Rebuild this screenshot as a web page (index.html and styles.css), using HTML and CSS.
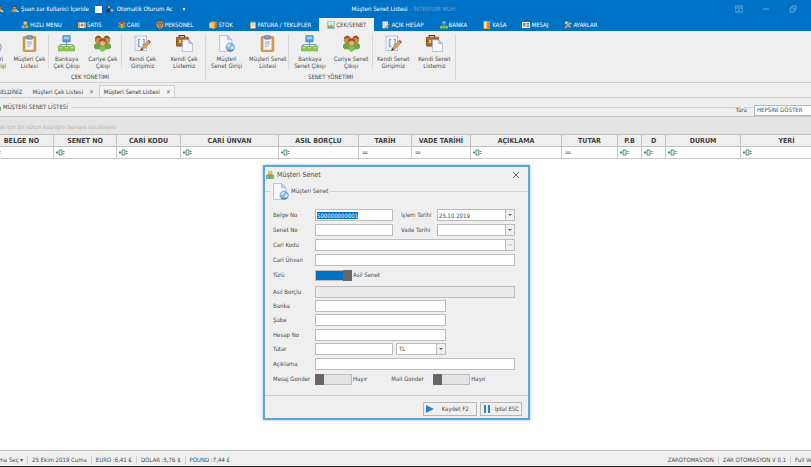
FILE: index.html
```html
<!DOCTYPE html>
<html lang="tr">
<head>
<meta charset="utf-8">
<title>Müşteri Senet Listesi</title>
<link rel="stylesheet" href="styles.css">
</head>
<body>
<svg class="defs" aria-hidden="true">
  <symbol id="clipboard" viewBox="0 0 32 32">
    <rect x="4" y="3" width="24" height="28" rx="2" fill="#d99a45" stroke="#ad7430"/>
    <rect x="8" y="7" width="16" height="21" fill="#f6f8fc" stroke="#b9c1cf"/>
    <rect x="10" y="1" width="12" height="7" rx="2" fill="#8f98a8" stroke="#687285"/>
    <path d="M11 13h10M11 17h10M11 21h7" stroke="#8fa6c8" stroke-width="2"/>
  </symbol>
  <symbol id="network" viewBox="0 0 32 32">
    <rect x="9" y="1" width="14" height="12" rx="1" fill="#5a9ee0" stroke="#3b74ae"/>
    <rect x="11" y="3" width="10" height="5" fill="#9dccf5"/>
    <path d="M16 13v8M4 22v-4h24v4" fill="none" stroke="#7d9dbd" stroke-width="2"/>
    <g fill="#8cc84b" stroke="#6ba334"><rect x="0" y="21" width="10" height="9" rx="1"/><rect x="11" y="21" width="10" height="9" rx="1"/><rect x="22" y="21" width="10" height="9" rx="1"/></g>
    <path d="M2 24h6M13 24h6M24 24h6" stroke="#c2e896" stroke-width="2"/>
  </symbol>
  <symbol id="people" viewBox="0 0 32 32">
    <path d="M0 23q0-8 8-7h16q8-1 8 7l-3 3h-6l-7 5-7-5H3z" fill="#69a83a" stroke="#467c20"/>
    <path d="M10 27q1-7 6-7t6 7l-6 4z" fill="#84c254"/>
    <g fill="#cf9257" stroke="#9a6236"><circle cx="8" cy="9" r="6"/><circle cx="24" cy="9" r="6"/><circle cx="16" cy="14" r="7"/></g>
    <path d="M2 8q0-6 6-7 5 0 6 5-6-1-12 2zM18 6q1-5 6-5t6 7q-6-3-12-2zM9 13q0-7 7-7t7 7q-7-4-14 0z" fill="#96562a"/>
    <circle cx="16" cy="16" r="4" fill="#e9b47d"/>
  </symbol>
  <symbol id="face" viewBox="0 0 16 16">
    <path d="M1 3l4-2h6l4 2v7l-4 5H5l-4-5z" fill="#e09a4e"/><path d="M1 2l4 2 3-2 3 2 4-2v5l-4-2-3 1-3-1-4 2z" fill="#9a5424"/><path d="M4 8h3M9 8h3M6 12h4" stroke="#6b3513" stroke-width="2"/>
  </symbol>
  <symbol id="notepad" viewBox="0 0 32 32">
    <rect x="2" y="2" width="22" height="27" fill="#fafcff" stroke="#7f93b8"/>
    <path d="M6 2v27" stroke="#b9c8e2"/>
    <path d="M12 8H9v14h3M16 8h3v10h-3" fill="none" stroke="#6c8abf" stroke-width="2"/>
    <path d="M14 24 26 11l4 4-12 12-6 2z" fill="#e3a04e" stroke="#93602a"/>
    <path d="m26 11 2-2 4 4-2 2z" fill="#c34d3f"/><path d="m12 29 2-5 3 4z" fill="#5b4330"/>
  </symbol>
  <symbol id="briefcase" viewBox="0 0 32 32">
    <path d="M6 5V1h10v4" fill="none" stroke="#5f3418" stroke-width="2"/>
    <rect x="0" y="4" width="24" height="17" rx="2" fill="#ad6835" stroke="#6d3a18"/>
    <path d="M0 12h24" stroke="#74401d" stroke-width="2"/><rect x="5" y="9" width="5" height="6" fill="#eac15d"/>
    <path d="M12 9h12l7 7v15H12z" fill="#f4f8ff" stroke="#7f9dc8"/><path d="M24 9v7h7z" fill="#bfd3ee" stroke="#7f9dc8"/>
  </symbol>
  <symbol id="docglobe" viewBox="0 0 32 32">
    <path d="M3 1h15l8 8v22H3z" fill="#f5f8fd" stroke="#829dc4"/><path d="M18 1v8h8z" fill="#c8d9ef" stroke="#829dc4"/>
    <circle cx="23" cy="23" r="8" fill="#8fb9e0" stroke="#5f8dbd"/>
    <path d="M17 20q3-5 7-3l-2 4-4 2zM24 22l6-1q0 6-5 8z" fill="#d2e6f7"/>
    <path d="M17 28q5 2 12 0" fill="none" stroke="#5683b3" stroke-width="2"/>
  </symbol>
  <symbol id="user" viewBox="0 0 16 16">
    <circle cx="7" cy="4" r="3" fill="#e9b27b" stroke="#6a3b1c"/><path d="M1 14q0-7 6-7t6 7z" fill="#d78b3b"/><path d="M4 4q0-4 3-4t3 4Q7 2 4 4z" fill="#5d3218"/><path d="m9 10 6 4" stroke="#f5d17b" stroke-width="3"/>
  </symbol>
  <symbol id="userlock" viewBox="0 0 16 16">
    <circle cx="6" cy="4" r="3" fill="#d6a77c" stroke="#3d2a28"/><path d="M0 15q0-8 6-8t6 8z" fill="#24365d"/><circle cx="12" cy="11" r="4" fill="#4c84cf"/><path d="M12 9v4M10 11h4" stroke="#e8f2ff"/>
  </symbol>
  <symbol id="blocks" viewBox="0 0 16 16">
    <rect x="5" y="1" width="7" height="7" rx="1" fill="#f3cc4b" stroke="#a98114"/><rect x="1" y="8" width="7" height="7" rx="1" fill="#75b3e4" stroke="#32699a"/><rect x="8" y="8" width="7" height="7" rx="1" fill="#86bf4b" stroke="#4b7d20"/>
  </symbol>
  <symbol id="cash" viewBox="0 0 16 16"><rect y="3" width="16" height="11" fill="#f5efe4"/><path d="M0 3h4v11H0zM12 3h4v11h-4z" fill="#dfa45e"/><circle cx="8" cy="8" r="3" fill="#ce6e3d"/></symbol>
  <symbol id="box" viewBox="0 0 16 16"><path d="m5 1 10 1v10l-4 3-10-1V4z" fill="#efa63d"/><path d="m1 4 10 1v10L1 14z" fill="#f8cb71"/><path d="m11 5 4-3v10l-4 3z" fill="#c57a22"/></symbol>
  <symbol id="contact" viewBox="0 0 16 16"><rect y="2" width="16" height="12" fill="#f5f5f5"/><rect x="2" y="4" width="5" height="7" fill="#d96c53"/><path d="M9 5h5M9 8h5M9 11h5" stroke="#567eae" stroke-width="2"/></symbol>
  <symbol id="safe" viewBox="0 0 16 16"><rect x="1" width="13" height="16" rx="1" fill="#eea13c"/><path d="M2 2h5v12H2z" fill="#ffe0a0"/><path d="M9 4h4M9 8h4M9 12h4" stroke="#a8611a" stroke-width="2"/></symbol>
  <symbol id="tools" viewBox="0 0 16 16"><path d="m2 14 9-9M3 3l10 10" stroke="#e2a85c" stroke-width="3"/><path d="M1 4 5 0l4 3-5 4zM10 1l2 3 3-1q1 4-3 4l-3-3z" fill="#d4dbe4" stroke="#65707c"/></symbol>
  <symbol id="sheet" viewBox="0 0 16 16"><rect x="1" width="14" height="16" fill="#b9d3c4" stroke="#8fa6bd"/><path d="M3 3h10M3 6h10" stroke="#edf5f0" stroke-width="2"/><path d="M2 15V9l4 2 3-3 5 4v3z" fill="#80a96c"/></symbol>
  <symbol id="contains" viewBox="0 0 18 14"><path d="M6 2h6v10H6z" fill="#e5f2ea" stroke="#4b9271" stroke-width="2"/><path d="M0 7h4M2 4v6M14 5h3M14 9h3" stroke="#4b9271" stroke-width="2"/></symbol>
  <symbol id="equals" viewBox="0 0 18 14"><path d="M3 6h10M3 9h10" stroke="#8b9093" stroke-width="2"/></symbol>
</svg>

<div class="shell">
  <header class="titlebar">
    <div class="quick">
      <svg class="ic"><use href="#user"/></svg>
      <svg class="ic"><use href="#user"/></svg><span>Şuan zar Kullanici İçeride</span>
      <label class="auto"><input type="checkbox"><svg class="ic"><use href="#userlock"/></svg>Otomatik Oturum Ac</label>
      <span class="more">▾</span>
    </div>
    <h1>Müşteri Senet Listesi <span>- INTERYUM MUH.</span></h1>
    <div class="winbtns">
      <button aria-label="Şerit"><svg viewBox="0 0 8 8"><path d="M0 1h8v6H0zM0 3h8M4 6V4" /></svg></button>
      <button aria-label="Küçült"><svg viewBox="0 0 8 8"><path d="M1 4h6"/></svg></button>
      <button aria-label="Geri yükle"><svg viewBox="0 0 8 8"><path d="M1 3h4v4H1zM3 3V1h4v4H5"/></svg></button>
      <button aria-label="Kapat"><svg viewBox="0 0 8 8"><path d="m1 1 6 6M7 1 1 7"/></svg></button>
    </div>
  </header>

  <nav class="menu">
    <a href="#"><svg class="ic"><use href="#blocks"/></svg>HIZLI MENU</a>
    <a href="#"><svg class="ic"><use href="#cash"/></svg>SATIS</a>
    <a href="#"><svg class="ic"><use href="#people"/></svg>CARİ</a>
    <a href="#"><svg class="ic"><use href="#face"/></svg>PERSONEL</a>
    <a href="#"><svg class="ic"><use href="#box"/></svg>STOK</a>
    <a href="#"><svg class="ic"><use href="#clipboard"/></svg>FATURA / TEKLİFLER</a>
    <a href="#" class="active"><svg class="ic"><use href="#sheet"/></svg>ÇEK/SENET</a>
    <a href="#"><svg class="ic"><use href="#notepad"/></svg>AÇIK HESAP</a>
    <a href="#"><svg class="ic"><use href="#network"/></svg>BANKA</a>
    <a href="#"><svg class="ic"><use href="#safe"/></svg>KASA</a>
    <a href="#"><svg class="ic"><use href="#contact"/></svg>MESAJ</a>
    <a href="#"><svg class="ic"><use href="#tools"/></svg>AYARLAR</a>
  </nav>

  <div class="ribbon">
    <section class="group">
      <div class="sets">
        <div class="set">
          <button><svg><use href="#docglobe"/></svg>Müşteri<br>Çek Girişi</button>
          <button><svg><use href="#clipboard"/></svg>Müşteri Çek<br>Listesi</button>
        </div>
        <div class="set">
          <button><svg><use href="#network"/></svg>Bankaya<br>Çek Çıkışı</button>
          <button><svg><use href="#people"/></svg>Cariye Çek<br>Çıkışı</button>
        </div>
        <div class="set broad">
          <button><svg><use href="#notepad"/></svg>Kendi Çek<br>Girişimiz</button>
          <button><svg><use href="#briefcase"/></svg>Kendi Çek<br>Listemiz</button>
        </div>
      </div>
      <h2>ÇEK YONETİMİ</h2>
    </section>
    <section class="group wide">
      <div class="sets">
        <div class="set">
          <button><svg><use href="#docglobe"/></svg>Müşteri<br>Senet Girişi</button>
          <button><svg><use href="#clipboard"/></svg>Müşteri Senet<br>Listesi</button>
        </div>
        <div class="set">
          <button><svg><use href="#network"/></svg>Bankaya<br>Senet Çıkışı</button>
          <button><svg><use href="#people"/></svg>Cariye Senet<br>Çıkışı</button>
        </div>
        <div class="set">
          <button><svg><use href="#notepad"/></svg>Kendi Senet<br>Girişimiz</button>
          <button><svg><use href="#briefcase"/></svg>Kendi Senet<br>Listemiz</button>
        </div>
      </div>
      <h2>SENET YÖNETİMİ</h2>
    </section>
  </div>

  <div class="tabs">
    <a href="#">HOŞGELDİNİZ</a>
    <a href="#">Müşteri Çek Listesi <span class="x">✕</span></a>
    <a href="#" class="active">Müşteri Senet Listesi <span class="x">✕</span></a>
  </div>

  <main>
    <div class="listhead">
      <svg class="ic"><use href="#blocks"/></svg><h2>MÜŞTERİ SENET LİSTESİ</h2><span class="rule"></span>
    </div>
    <div class="filter">
      <label for="type">Türü</label>
      <select id="type"><option>HEPSİNİ GÖSTER</option></select>
    </div>
    <p class="hint">Gruplamak için bir sütun başlığını buraya sürükleyin</p>
    <table>
      <colgroup><col class="c14"><col class="c64"><col class="c63"><col class="c64"><col class="c98"><col class="c80"><col class="c53"><col class="c59"><col class="c91"><col class="c56"><col class="c24"><col class="c24"><col class="c75"><col></colgroup>
      <thead>
        <tr><th></th><th>BELGE NO</th><th>SENET NO</th><th>CARİ KODU</th><th>CARİ ÜNVAN</th><th>ASIL BORÇLU</th><th>TARİH</th><th>VADE TARİHİ</th><th>AÇIKLAMA</th><th>TUTAR</th><th>P.B</th><th>D</th><th>DURUM</th><th>YERİ</th></tr>
      </thead>
      <tbody>
        <tr>
          <td></td>
          <td><svg><use href="#contains"/></svg></td><td><svg><use href="#contains"/></svg></td><td><svg><use href="#contains"/></svg></td><td><svg><use href="#contains"/></svg></td><td><svg><use href="#contains"/></svg></td>
          <td><svg><use href="#equals"/></svg></td><td><svg><use href="#equals"/></svg></td>
          <td><svg><use href="#contains"/></svg></td><td><svg><use href="#equals"/></svg></td>
          <td><svg><use href="#contains"/></svg></td><td><svg><use href="#contains"/></svg></td><td><svg><use href="#contains"/></svg></td><td><svg><use href="#contains"/></svg></td>
        </tr>
      </tbody>
    </table>
  </main>

  <footer>
    <span>Tema Seç ▾</span><span>25 Ekim 2019 Cuma</span><span>EURO :6,41 €</span><span>DOLAR :5,76 $</span><span class="last">POUND :7,44 £</span>
    <span class="push">ZAROTOMASYON</span><span>ZAR OTOMASYON V 0.1</span><span class="last">Full Versiyon</span>
  </footer>
</div>

<form class="dialog" role="dialog" aria-labelledby="dlg-title">
  <div class="dlg-head">
    <svg class="ic"><use href="#blocks"/></svg><h2 id="dlg-title">Müşteri Senet</h2>
    <button type="button" aria-label="Kapat"><svg viewBox="0 0 8 8"><path d="m1 1 6 6M7 1 1 7"/></svg></button>
  </div>
  <div class="dlg-sub">
    <span class="rule short"></span><svg><use href="#docglobe"/></svg><span>Müşteri Senet</span><span class="rule"></span>
  </div>
  <div class="fields">
    <div class="block roomy">
      <div class="row"><label for="belge">Belge No</label><input id="belge" class="half" value="S00000000001"><label for="islem" class="mid">İşlem Tarihi</label><span class="combo"><input id="islem" value="25.10.2019"><button type="button" aria-label="Takvim"><i></i></button></span></div>
      <div class="row"><label for="senet">Senet No</label><input id="senet" class="half"><label for="vade" class="mid">Vade Tarihi</label><span class="combo"><input id="vade"><button type="button" aria-label="Takvim"><i></i></button></span></div>
      <div class="row"><label for="kod">Cari Kodu</label><span class="combo"><input id="kod"><button type="button" aria-label="Seç">···</button></span></div>
      <div class="row"><label for="unvan">Cari Ünvan</label><input id="unvan"></div>
      <div class="row"><label for="turu">Türü</label><input id="turu" type="checkbox" class="switch" checked><span>Asil Senet</span></div>
    </div>
    <div class="block">
      <div class="row"><label for="asil">Asıl Borçlu</label><input id="asil" disabled></div>
      <div class="row"><label for="banka">Banka</label><input id="banka" class="medium"></div>
      <div class="row"><label for="sube">Şube</label><input id="sube" class="medium"></div>
    </div>
    <div class="block">
      <div class="row"><label for="hesap">Hesap No</label><input id="hesap" class="medium"></div>
      <div class="row"><label for="tutar">Tutar</label><input id="tutar" class="half"><span class="combo currency"><select aria-label="Para birimi"><option>TL</option></select><b><i></i></b></span></div>
    </div>
    <div class="block roomy">
      <div class="row"><label for="aciklama">Açıklama</label><input id="aciklama"></div>
      <div class="row"><label for="mesaj">Mesaj Gonder</label><input id="mesaj" type="checkbox" class="switch"><span>Hayır</span><label for="mail" class="mail">Mail Gonder</label><input id="mail" type="checkbox" class="switch"><span>Hayır</span></div>
    </div>
  </div>
  <div class="actions">
    <button type="button" class="save"><svg viewBox="0 0 8 8"><path d="M0 0 8 4 0 8z"/></svg>Kaydet F2</button>
    <button type="button"><svg viewBox="0 0 8 8"><path d="M1 0h2v8H1zM5 0h2v8H5z"/></svg>İptal ESC</button>
  </div>
</form>
<script src="app.js"></script>
</body>
</html>
```
FILE: styles.css
```css
* { box-sizing: border-box; }
html, body { height: 100%; overflow: hidden; }
body { margin: 0; color: #484848; font: 6px/8px "DejaVu Sans Condensed", "Noto Sans", sans-serif; background: #fff; }
h1, h2, p { margin: 0; font: inherit; }
a { color: inherit; text-decoration: none; }
button, input, select { font: inherit; color: inherit; margin: 0; padding: 0; border: 0; border-radius: 0; background: none; }
select { appearance: none; }
svg { display: block; flex: none; }
.defs { position: absolute; width: 0; height: 0; }
.ic { width: 8px; height: 8px; }
.rule { flex: 1; height: 1px; background: #d4d4d4; }

/* the window is maximised a little past both screen edges */
.shell { display: flex; flex-direction: column; min-height: 100%; margin-left: -25px; width: calc(100% + 47px); }

.titlebar { display: grid; grid-template-columns: 1fr auto 1fr; align-items: center; height: 18px; color: #fff; background: #0072c6; }
.titlebar h1 span { color: #62a6dc; }
.quick { display: flex; align-items: center; gap: 2px; padding-left: 21px; }
.quick .ic + .ic { margin-left: 5px; }
.auto { display: flex; align-items: center; gap: 3px; margin-left: 4px; }
.auto input { appearance: none; width: 7px; height: 7px; margin-right: 1px; background: #fff; }
.more { margin-left: 8px; }
.winbtns { display: flex; justify-content: flex-end; }
.winbtns button { display: flex; justify-content: center; width: 27px; }
.winbtns svg { width: 8px; height: 8px; fill: none; stroke: #62a6dc; }

.menu { display: flex; height: 13px; padding-left: 38px; color: #fff; background: #0072c6; }
.menu a { display: flex; align-items: center; gap: 1px; padding: 0 8px; }
.menu .active { color: #484848; background: #efefef; }

.ribbon { display: flex; height: 52px; padding-top: 3px; background: #efefef; border-bottom: 1px solid #d2d2d2; }
.group { width: 231px; border-right: 1px solid #d8d8d8; margin-bottom: 2px; }
.group.wide { width: 250px; }
.group h2 { margin-top: 5px; text-align: center; }
.sets { display: flex; height: 34px; }
.set { display: flex; flex: 1; border-right: 1px solid #d8d8d8; }
.set.broad { flex: 0 0 83px; }
.set:last-child { border-right: 0; }
.set button { display: block; flex: 1; white-space: nowrap; line-height: 7px; text-align: center; }
.set svg { width: 17px; height: 17px; margin: 1px auto 3px; }

.tabs { display: flex; height: 15px; padding: 2px 0 0 5px; background: #efefef; border-bottom: 1px solid #d2d2d2; }
.tabs a { display: flex; align-items: center; gap: 6px; padding: 0 4px; border: 1px solid transparent; border-bottom: 0; }
.tabs .active { border-color: #cfcfcf; background: #f4f4f4; color: #333; }
.x { color: #666; }

main { flex: 1; }
.listhead { display: flex; align-items: center; gap: 2px; height: 18px; padding-left: 18px; background: #efefef; }
.listhead .rule { margin-left: 2px; }
.filter { display: flex; justify-content: flex-end; align-items: center; gap: 7px; height: 12px; margin-top: -12px; }
.filter label { background: #efefef; }
.filter select { width: 79px; height: 11px; padding-left: 2px; border: 1px solid #b8b8b8; background: #fff; }
.hint { height: 18px; padding: 6px 0 0 0; color: #b4b4b4; background: #e4e4e4; border-top: 1px solid #c8c8c8; }
table { width: 100%; table-layout: fixed; border-collapse: collapse; }
th { height: 12px; padding: 0; border: 1px solid #c2c2c2; background: #efefef; color: #3f3f3f; font-size: 7px; white-space: nowrap; }
td { height: 12px; padding: 0 2px; border: 1px solid #c8c8c8; border-width: 0 1px 1px; }
td svg { width: 9px; height: 7px; }
.c14 { width: 14px; } .c24 { width: 24px; } .c53 { width: 53px; } .c56 { width: 56px; } .c59 { width: 59px; } .c63 { width: 63px; }
.c64 { width: 64px; } .c75 { width: 75px; } .c80 { width: 80px; } .c91 { width: 91px; } .c98 { width: 98px; }

footer { display: flex; align-items: center; height: 17px; padding: 2px 0 0 14px; background: #efefef; border-top: 1px solid #c4c4c4; border-bottom: 1px solid #222; }
footer span { padding: 0 4px; border-right: 1px solid #cfcfcf; white-space: nowrap; }
footer .last { border-right: 0; }
footer .push { margin-left: auto; }

.dialog { position: absolute; left: 263px; top: 165px; width: 267px; background: #efefef; border: 2px solid #5fa5d3; box-shadow: 0 0 3px #9cc4e0; }
.dlg-head { display: flex; align-items: center; gap: 3px; height: 15px; padding-left: 1px; }
.dlg-head h2 { font-size: 7px; }
.dlg-head button { margin-left: auto; padding-right: 8px; }
.dlg-head button svg { width: 8px; height: 8px; fill: none; stroke: #666; }
.dlg-sub { display: flex; align-items: center; gap: 2px; height: 18px; }
.dlg-sub svg { width: 17px; height: 17px; }
.rule.short { flex: none; width: 5px; }
.fields { display: flex; flex-direction: column; gap: 3px; padding: 9px 13px 0 8px; }
.block { display: flex; flex-direction: column; gap: 2px; }
.block.roomy { gap: 3px; }
.block.roomy:first-child { margin-bottom: 2px; }
.row { display: flex; align-items: center; height: 12px; white-space: nowrap; }
.row > label:first-child { width: 42px; flex: none; }
.row input:not(.switch), .combo { flex: 1; min-width: 0; height: 12px; border: 1px solid #bcbcbc; background: #fff; }
.row input:not(.switch) { padding: 0 1px; outline: 0; }
.row input.half { flex: none; width: 78px; }
.row input.medium { flex: none; width: 131px; }
.row input:disabled { background: #ebebeb; }
input::selection { color: #fff; background: #0072c6; }
.mid { width: 44px; padding-left: 8px; }
.combo { display: flex; }
.combo input:not(.switch) { height: 10px; border: 0; }
.combo select { flex: 1; padding-left: 2px; }
.combo button, .combo b { display: flex; align-items: center; justify-content: center; width: 9px; border-left: 1px solid #bcbcbc; background: #efefef; }
.combo i { border: 2px solid transparent; border-top-color: #666; border-bottom: 0; }
.currency { flex: none; width: 50px; margin-left: 3px; }
.switch { appearance: none; position: relative; width: 37px; height: 11px; margin-right: 1px; border: 1px solid #bcbcbc; background: #e4e4e4; }
.switch::before { content: ""; position: absolute; top: -1px; bottom: -1px; left: -1px; width: 9px; background: #666; }
.switch:checked { background: #0072c6; }
.switch:checked::before { left: auto; right: -1px; }
.mail { width: 42px; margin-left: 24px; }
.actions { display: flex; justify-content: flex-end; gap: 3px; margin-top: 10px; padding: 6px 6px 2px; border-top: 1px solid #d0d0d0; }
.actions button { display: flex; align-items: center; gap: 4px; height: 14px; padding: 0 2px; border: 1px solid #b8b8b8; }
.actions .save { gap: 8px; padding-right: 7px; }
.actions svg { width: 8px; height: 8px; fill: #2b87bd; }
```
FILE: app.js
```js
const first = document.getElementById('belge');
first.focus();
first.select();
```
